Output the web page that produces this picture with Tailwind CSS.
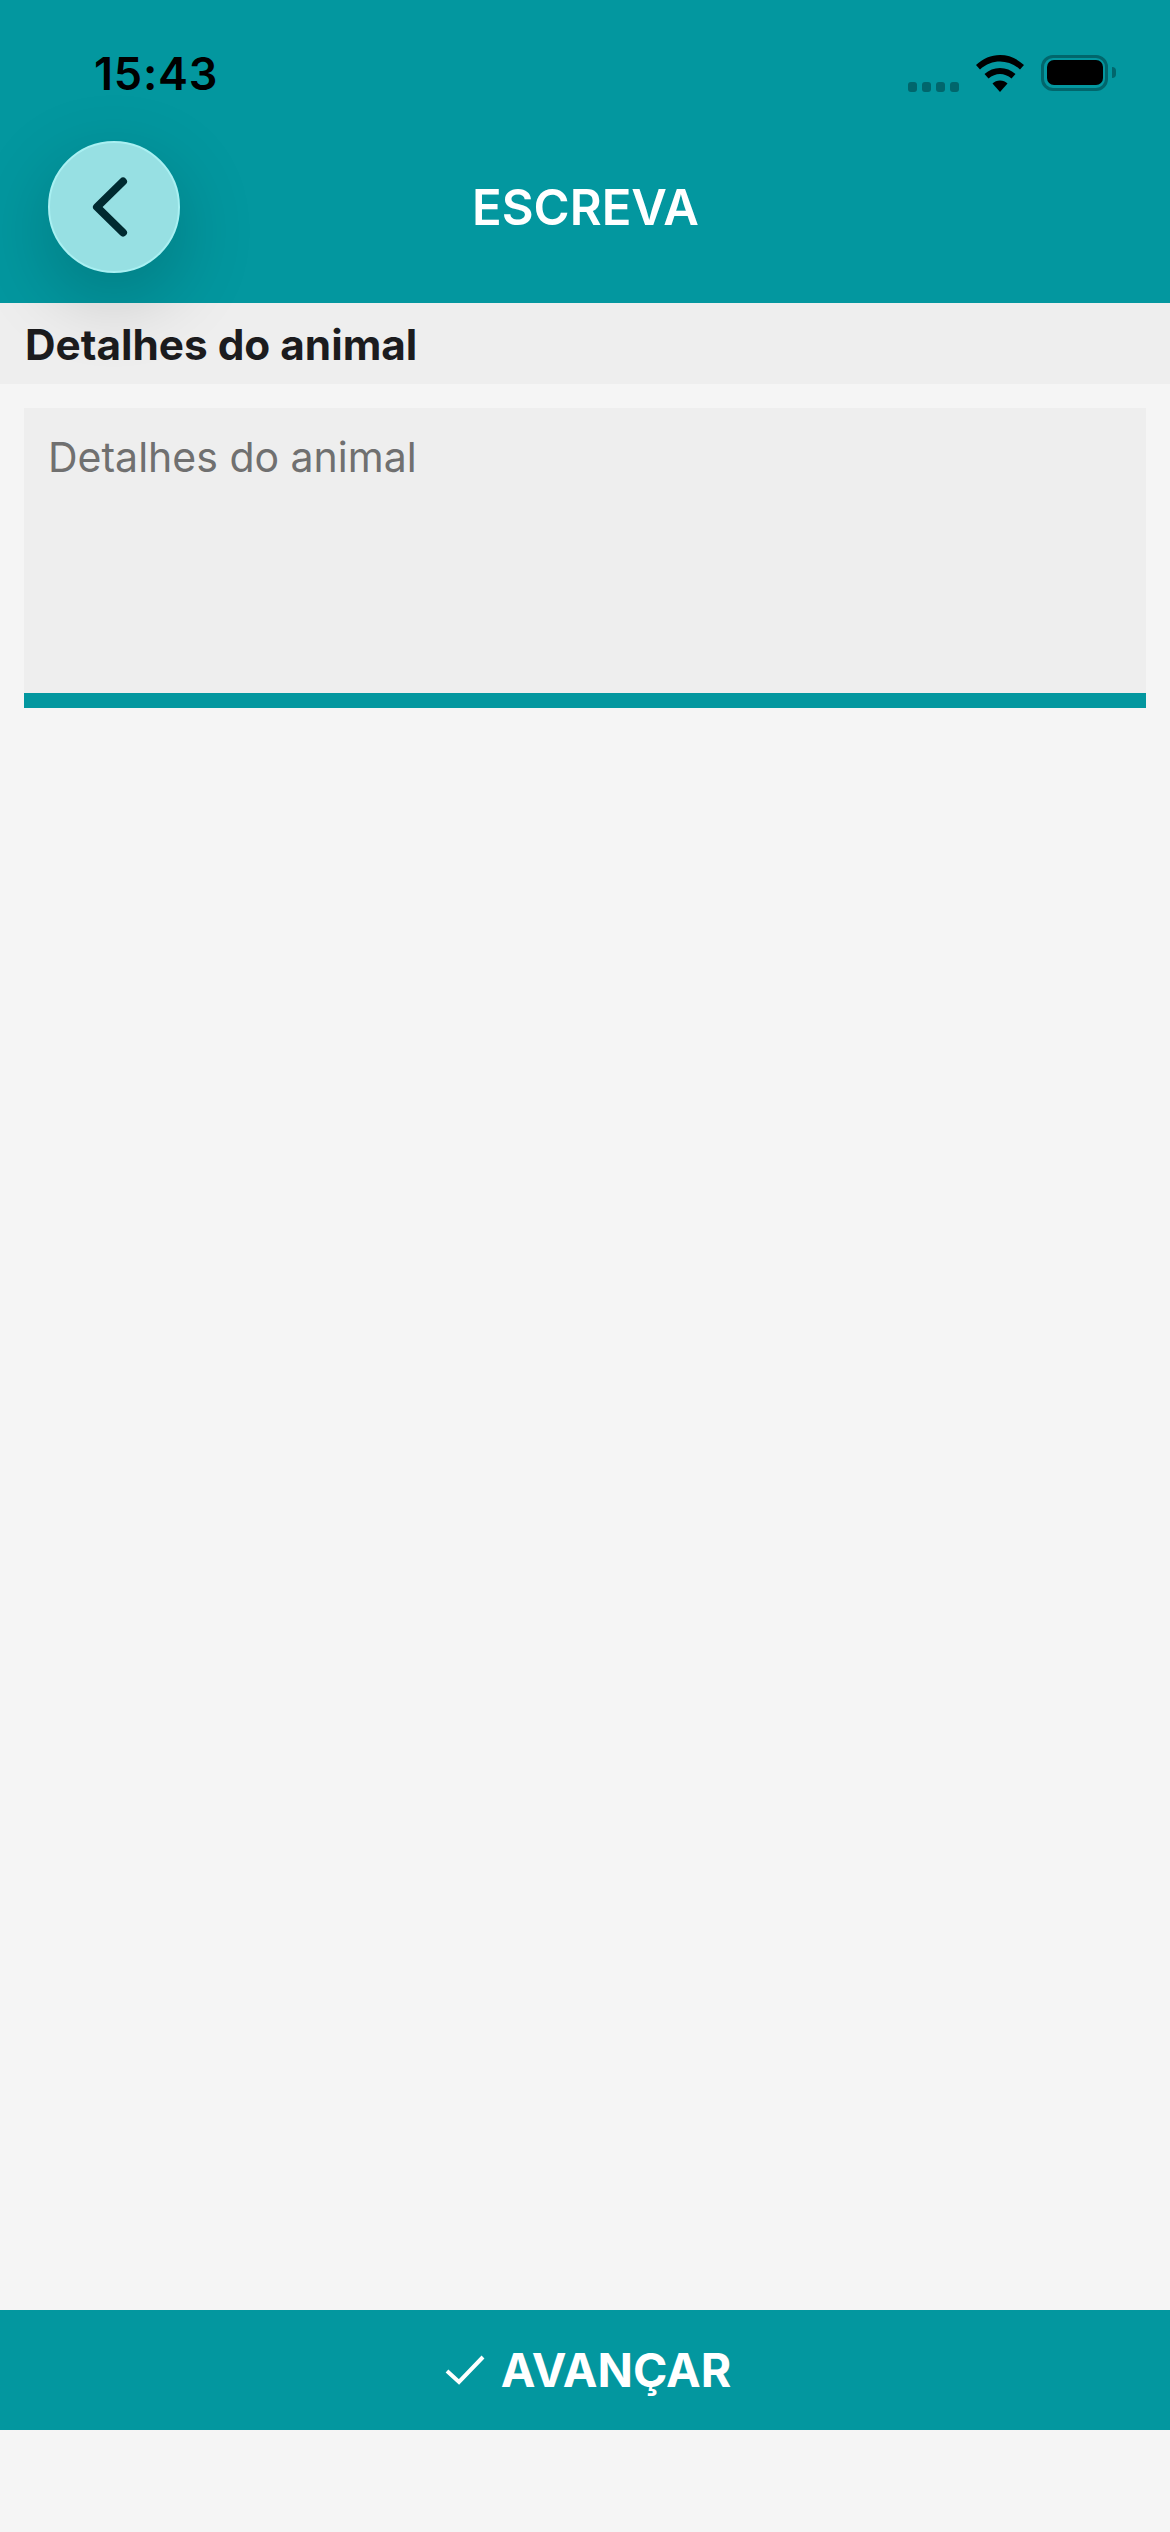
<!DOCTYPE html>
<html lang="pt">
<head>
<meta charset="utf-8">
<script src="https://cdn.jsdelivr.net/npm/@tailwindcss/browser@4"></script>
<title>Escreva</title>
</head>
<body class="m-0 bg-[#f5f5f5] font-['Inter',sans-serif]">
<div class="flex flex-col w-[1170px] h-[2532px] bg-[#f5f5f5] overflow-hidden">
  <header class="relative z-10 h-[303px] shrink-0 bg-[#03979f]">
    <div class="flex items-center justify-between h-[141px] pl-[94px] pr-[54px]">
      <span class="text-[45px] leading-[54px] font-semibold text-black mt-[7px] tracking-[0.8px]">15:43</span>
      <div class="flex items-start gap-[17px] mt-[5px]">
        <div class="flex gap-[5px] mt-[27px]">
          <span class="w-[9px] h-[10px] rounded-[3px] bg-[#01666c]"></span>
          <span class="w-[9px] h-[10px] rounded-[3px] bg-[#01666c]"></span>
          <span class="w-[9px] h-[10px] rounded-[3px] bg-[#01666c]"></span>
          <span class="w-[9px] h-[10px] rounded-[3px] bg-[#01666c]"></span>
        </div>
        <svg width="48" height="37" viewBox="0 0 48 37" class="block">
          <path d="M24 0C15 0 7 3.500 0 10L4 14.500C10 9 17 6.500 24 6.500C31 6.500 38 9 44 14.500L48 10C41 3.500 33 0 24 0Z" fill="#000"/>
          <path d="M24 13C18 13 13 15 8.500 19L12.500 23.500C16 20.500 20 19 24 19C28 19 32 20.500 35.500 23.500L39.500 19C35 15 30 13 24 13Z" fill="#000"/>
          <path d="M24 25.500C21 25.500 18.500 26.500 16.500 28.500L24 37L31.500 28.500C29.500 26.500 27 25.500 24 25.500Z" fill="#000"/>
        </svg>
        <div class="flex items-center gap-[4px]">
          <div class="flex items-center justify-center w-[67px] h-[36px] rounded-[12px] border-[3px] border-[#01666c]">
            <span class="block w-[56px] h-[25px] rounded-[7px] bg-black"></span>
          </div>
          <span class="block w-[4px] h-[11px] rounded-r-[4px] bg-[#01666c]"></span>
        </div>
      </div>
    </div>
    <div class="relative flex items-center justify-center h-[132px]">
      <button class="absolute left-[48px] top-0 flex items-center justify-center w-[132px] h-[132px] rounded-full bg-[#97e0e3] border-[2px] border-[#a9f0f2] shadow-[0_24px_80px_rgba(0,0,0,0.2)]">
        <svg width="36" height="60" viewBox="0 0 36 60" class="block -ml-[8px]">
          <path d="M31 4.500L5 30L31 55.500" fill="none" stroke="#002a30" stroke-width="8" stroke-linecap="round" stroke-linejoin="round"/>
        </svg>
      </button>
      <h1 class="text-[49px] leading-[58px] font-semibold text-white mt-[2px] ml-[1px]">ESCREVA</h1>
    </div>
  </header>
  <div class="flex items-center h-[81px] shrink-0 px-[25px] bg-[#eeeeee]">
    <h2 class="text-[42.300px] leading-[50px] font-bold text-[#1c1c1e] mt-[2px]">Detalhes do animal</h2>
  </div>
  <div class="flex-1 flex flex-col px-[24px] pt-[24px]">
    <div class="h-[300px] pt-[24px] px-[24px] bg-[#eeeeee] border-b-[15px] border-[#03979f]">
      <p class="text-[41px] leading-[50px] font-normal text-[#707070]">Detalhes do animal</p>
    </div>
    <div class="mt-auto -mx-[24px] mb-[102px] pl-[6px] flex items-center justify-center gap-[16px] h-[120px] bg-[#03979f]">
      <svg width="40" height="32" viewBox="0 0 40 32" class="block">
        <path d="M2 17L14 28L38 3" fill="none" stroke="#fff" stroke-width="4"/>
      </svg>
      <span class="text-[46.500px] leading-[56px] font-bold text-white">AVANÇAR</span>
    </div>
  </div>
</div>
</body>
</html>
